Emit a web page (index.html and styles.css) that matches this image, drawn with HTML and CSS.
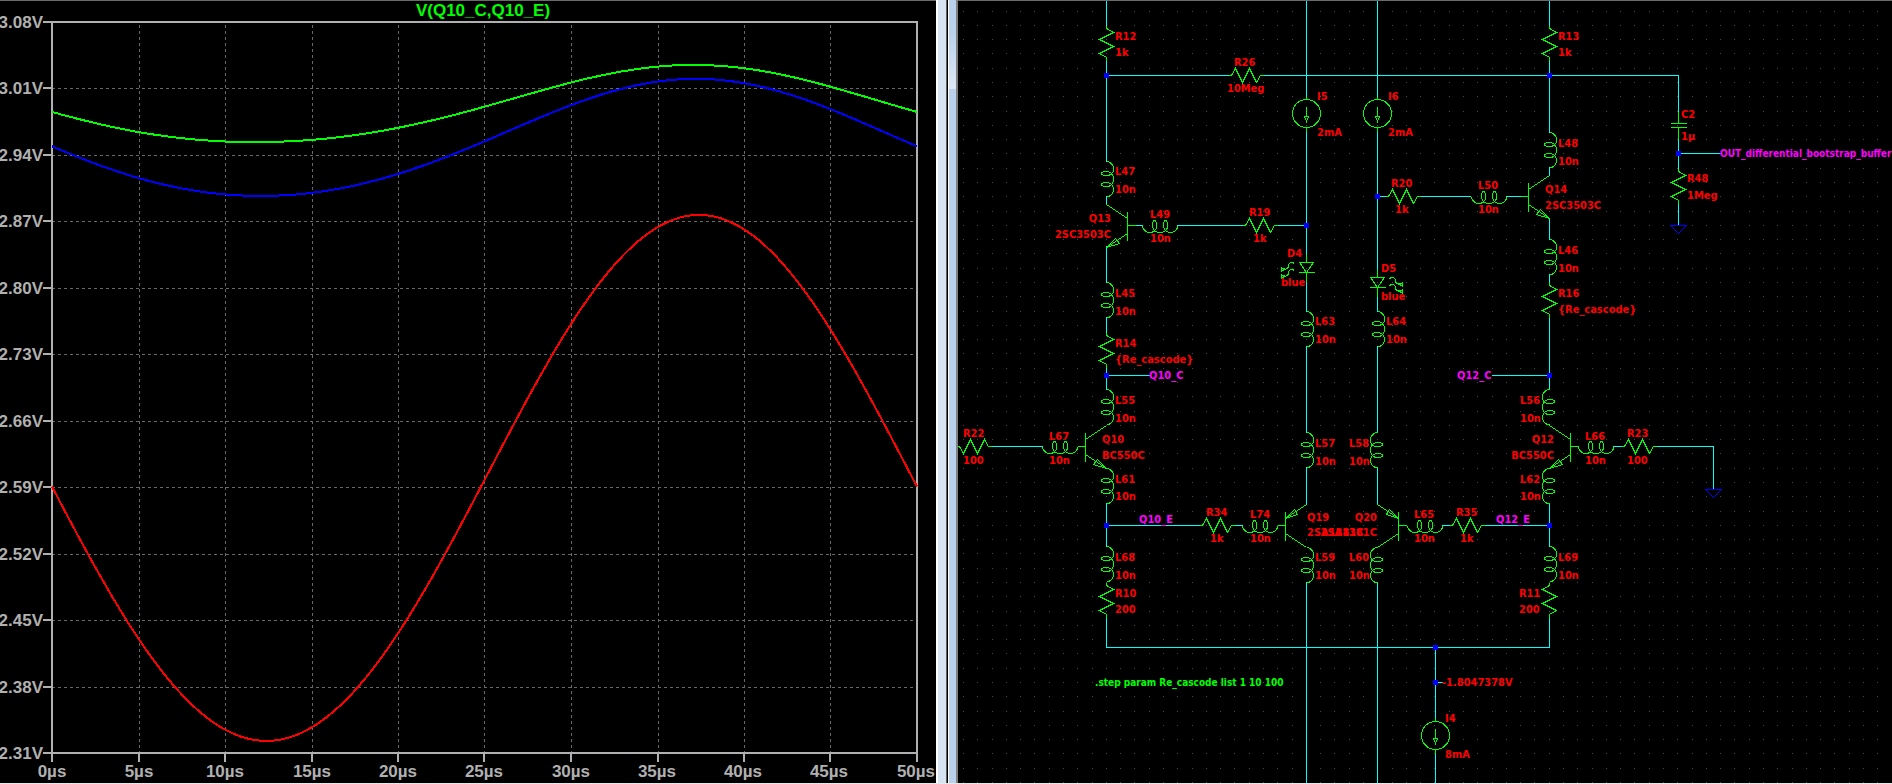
FILE: index.html
```
<!DOCTYPE html>
<html lang="en">
<head>
    <meta charset="UTF-8">
    <meta name="viewport" content="width=device-width, initial-scale=1.0">
    <title>Cascode buffer simulation</title>
    <link rel="stylesheet" href="styles.css">
</head>
<body>
    <main class="workspace">
        <section class="pane pane-plot">
            <svg class="plot" viewBox="0 0 936 783" preserveAspectRatio="xMinYMin meet" role="img" aria-label="Waveform V(Q10_C,Q10_E)">
                <text class="plot-title" x="483" y="16">V(Q10_C,Q10_E)</text>

                <path class="grid" d="M52 88.5H914M52 155.5H914M52 221.5H914M52 288.5H914M52 354.5H914M52 421.5H914M52 487.5H914M52 554.5H914M52 620.5H914M52 687.5H914"/>
                <path class="grid" d="M139.5 25V752M225.5 25V752M312.5 25V752M398.5 25V752M484.5 25V752M571.5 25V752M658.5 25V752M744.5 25V752M830.5 25V752"/>

                <path class="axis" d="M43 22H918M43 753H917M52 21V762M917 21V762"/>
                <path class="axis" d="M43 88H52M43 155H52M43 221H52M43 288H52M43 354H52M43 421H52M43 487H52M43 554H52M43 620H52M43 687H52"/>
                <path class="axis" d="M139 753V762M225 753V762M312 753V762M398 753V762M484 753V762M571 753V762M658 753V762M744 753V762M830 753V762"/>

                <g class="ticks ticks-y">
                    <text x="43" y="28">3.08V</text>
                    <text x="43" y="94">3.01V</text>
                    <text x="43" y="161">2.94V</text>
                    <text x="43" y="227">2.87V</text>
                    <text x="43" y="294">2.80V</text>
                    <text x="43" y="360">2.73V</text>
                    <text x="43" y="427">2.66V</text>
                    <text x="43" y="493">2.59V</text>
                    <text x="43" y="560">2.52V</text>
                    <text x="43" y="626">2.45V</text>
                    <text x="43" y="693">2.38V</text>
                    <text x="43" y="759">2.31V</text>
                </g>
                <g class="ticks ticks-x">
                    <text x="52" y="777">0µs</text>
                    <text x="139" y="777">5µs</text>
                    <text x="225" y="777">10µs</text>
                    <text x="312" y="777">15µs</text>
                    <text x="398" y="777">20µs</text>
                    <text x="484" y="777">25µs</text>
                    <text x="571" y="777">30µs</text>
                    <text x="657" y="777">35µs</text>
                    <text x="743" y="777">40µs</text>
                    <text x="829" y="777">45µs</text>
                    <text x="916" y="777">50µs</text>
                </g>

                <path class="trace trace-green" id="trace1"/>
                <path class="trace trace-blue" id="trace2"/>
                <path class="trace trace-red" id="trace3"/>
            </svg>
        </section>

        <div class="splitter">
            <div class="frame frame-left"></div>
            <div class="frame frame-right"></div>
        </div>

        <section class="pane pane-schematic">
            <svg class="schematic" viewBox="958 0 934 783" preserveAspectRatio="xMinYMin meet" role="img" aria-label="Differential bootstrap buffer schematic">
                <defs>
                    <pattern id="dots" x="963" y="11" width="100" height="100" patternUnits="userSpaceOnUse">
                        <path class="dots" d="M0 .5H100M0 14.5H100M0 28.5H100M0 42.5H100M0 57.5H100M0 71.5H100M0 85.5H100"/>
                    </pattern>
                    <path id="res" d="M0 0V3L7 7L-7 14L7 21L-7 28L0 32V35"/>
                    <path id="ind" d="M0 0H2C5 2 7 4 7 7C7 11 5 14 0 14C-3 14 -5 13 -5 12C-5 11 -3 10 0 10C5 10 7 14 7 17C7 22 5 25 0 25C-3 25 -5 24 -5 23C-5 22 -3 21 0 21C5 21 7 25 7 28C7 31 5 34 2 35H0"/>
                    <path id="npn" d="M0 0L-21 14M-21 7V36M-29 21H-21M-21 29L0 43L-9 34L-13 39L0 43"/>
                    <path id="pnp" d="M0 0L-21 14M-21 7V36M-29 21H-21M-21 29L0 43M-21 14L-12 5L-9 10Z"/>
                    <path id="src" d="M-14 0A14 14 0 1 0 14 0A14 14 0 1 0 -14 0M0 -17V-14M0 14V18M0 -7V3M-2 3H2L0 8Z"/>
                    <path id="led" d="M0 -8V0M-7 0H7L0 10ZM-8 10H8M0 10V19M12 1C15 -1 18 0 18 3C18 7 21 7 25 6M25 4V9L21 6M12 8C15 6 18 7 18 10C18 14 21 14 25 13M25 11V16L21 13"/>
                    <path id="cap" d="M0 -12V0M-8 0H8M-8 4H8M0 4V16"/>
                    <path id="gnd" d="M-8 0H8L0 8Z"/>
                    <rect id="node" x="-2.5" y="-2.5" width="5" height="5"/>
                </defs>

                <rect x="958" width="934" height="783" fill="url(#dots)"/>

                <g class="wires">
                    <path d="M1106.5 1V26M1106.5 60V162M1106.5 196V204M1106.5 246V283M1106.5 317V333M1106.5 367V390M1106.5 503V547M1106.5 617V647.5H1549.5V617"/>
                    <path d="M1306.5 1V98M1306.5 132V255M1306.5 282V312M1306.5 346V433M1306.5 467V505M1306.5 582V783"/>
                    <path d="M1377.5 1V98M1377.5 132V270M1377.5 296V312M1377.5 346V433M1377.5 467V505M1377.5 582V783"/>
                    <path d="M1549.5 1V26M1549.5 60V133M1549.5 167V176M1549.5 218V240M1549.5 274V283M1549.5 317V390M1549.5 503V547"/>
                    <path d="M1106 75.5H1229M1263 75.5H1678.5V112M1678.5 139V169M1678.5 153.5H1721M1678.5 203V225"/>
                    <path d="M1135 225.5H1143M1177 225.5H1243M1277 225.5H1307M1377 196.5H1386M1420 196.5H1471M1506 196.5H1521"/>
                    <path d="M991 446.5H1043M1613 446.5H1622M1656 446.5H1713.5V489M1106 375.5H1150M1492 375.5H1549"/>
                    <path d="M1106 525.5H1200M1234 525.5H1243M1442 525.5H1450M1485 525.5H1549"/>
                    <path d="M1435.5 647V720M1435.5 754V783M1435 682.5H1443"/>
                </g>

                <g class="parts">
                    <use href="#res" transform="translate(1106.5 25.5)"/>
                    <use href="#res" transform="translate(1549.5 25.5)"/>
                    <use href="#res" transform="translate(1228.5 75.5) rotate(-90)"/>
                    <use href="#res" transform="translate(1242.5 225.5) rotate(-90)"/>
                    <use href="#res" transform="translate(1385.5 196.5) rotate(-90)"/>
                    <use href="#res" transform="translate(1678.5 168.5)"/>
                    <use href="#res" transform="translate(1549.5 282.5)"/>
                    <use href="#res" transform="translate(1106.5 332.5)"/>
                    <use href="#res" transform="translate(991.5 446.5) rotate(90) scale(-1 1)"/>
                    <use href="#res" transform="translate(1621.5 446.5) rotate(-90)"/>
                    <use href="#res" transform="translate(1199.5 525.5) rotate(-90)"/>
                    <use href="#res" transform="translate(1449.5 525.5) rotate(-90)"/>
                    <use href="#res" transform="translate(1106.5 582.5)"/>
                    <use href="#res" transform="translate(1549.5 582.5) scale(-1 1)"/>

                    <use href="#ind" transform="translate(1106.5 161.5)"/>
                    <use href="#ind" transform="translate(1549.5 132.5)"/>
                    <use href="#ind" transform="translate(1549.5 239.5)"/>
                    <use href="#ind" transform="translate(1106.5 282.5)"/>
                    <use href="#ind" transform="translate(1306.5 311.5)"/>
                    <use href="#ind" transform="translate(1377.5 311.5)"/>
                    <use href="#ind" transform="translate(1106.5 389.5)"/>
                    <use href="#ind" transform="translate(1549.5 389.5) scale(-1 1)"/>
                    <use href="#ind" transform="translate(1306.5 432.5)"/>
                    <use href="#ind" transform="translate(1377.5 432.5) scale(-1 1)"/>
                    <use href="#ind" transform="translate(1106.5 468.5)"/>
                    <use href="#ind" transform="translate(1549.5 468.5) scale(-1 1)"/>
                    <use href="#ind" transform="translate(1106.5 546.5)"/>
                    <use href="#ind" transform="translate(1306.5 547.5)"/>
                    <use href="#ind" transform="translate(1377.5 547.5) scale(-1 1)"/>
                    <use href="#ind" transform="translate(1549.5 546.5)"/>
                    <use href="#ind" transform="matrix(0 1 1 0 1142.5 225.5)"/>
                    <use href="#ind" transform="matrix(0 1 1 0 1471.5 196.5)"/>
                    <use href="#ind" transform="matrix(0 1 1 0 1042.5 446.5)"/>
                    <use href="#ind" transform="matrix(0 1 1 0 1578.5 446.5)"/>
                    <use href="#ind" transform="matrix(0 1 1 0 1242.5 525.5)"/>
                    <use href="#ind" transform="matrix(0 1 1 0 1407.5 525.5)"/>

                    <use href="#npn" transform="translate(1106.5 204.5) scale(-1 1)"/>
                    <use href="#npn" transform="translate(1549.5 175.5)"/>
                    <use href="#npn" transform="translate(1106.5 425.5)"/>
                    <use href="#npn" transform="translate(1549.5 425.5) scale(-1 1)"/>
                    <use href="#pnp" transform="translate(1306.5 504.5)"/>
                    <use href="#pnp" transform="translate(1377.5 504.5) scale(-1 1)"/>

                    <use href="#src" transform="translate(1306.5 113.5)"/>
                    <use href="#src" transform="translate(1377.5 113.5)"/>
                    <use href="#src" transform="translate(1435.5 735.5)"/>
                    <use href="#led" transform="translate(1306.5 262.5) scale(-1 1)"/>
                    <use href="#led" transform="translate(1377.5 277.5)"/>
                    <use href="#cap" transform="translate(1678.5 123.5)"/>
                </g>

                <g class="grounds">
                    <use href="#gnd" x="1678.5" y="225.5"/>
                    <use href="#gnd" x="1713.5" y="489.5"/>
                </g>

                <g class="nodes">
                    <use href="#node" x="1106.5" y="75.5"/>
                    <use href="#node" x="1549.5" y="75.5"/>
                    <use href="#node" x="1678.5" y="153.5"/>
                    <use href="#node" x="1377.5" y="196.5"/>
                    <use href="#node" x="1306.5" y="225.5"/>
                    <use href="#node" x="1106.5" y="375.5"/>
                    <use href="#node" x="1549.5" y="375.5"/>
                    <use href="#node" x="1106.5" y="525.5"/>
                    <use href="#node" x="1549.5" y="525.5"/>
                    <use href="#node" x="1435.5" y="647.5"/>
                    <use href="#node" x="1435.5" y="682.5"/>
                </g>

                <g class="labels">
                    <text x="1115" y="40">R12</text><text x="1115" y="56">1k</text>
                    <text x="1558" y="40">R13</text><text x="1558" y="56">1k</text>
                    <text x="1234" y="66">R26</text><text x="1227" y="92">10Meg</text>
                    <text x="1317" y="100">I5</text><text x="1317" y="136">2mA</text>
                    <text x="1388" y="100">I6</text><text x="1388" y="136">2mA</text>
                    <text x="1681" y="118">C2</text><text x="1681" y="140">1µ</text>
                    <text x="1687" y="182">R48</text><text x="1687" y="199">1Meg</text>
                    <text x="1558" y="147">L48</text><text x="1558" y="165">10n</text>
                    <text x="1115" y="175">L47</text><text x="1115" y="193">10n</text>
                    <text x="1391" y="187">R20</text><text x="1395" y="213">1k</text>
                    <text x="1478" y="189">L50</text><text x="1478" y="213">10n</text>
                    <text x="1545" y="193">Q14</text><text x="1545" y="209">2SC3503C</text>
                    <text class="end" x="1111" y="222">Q13</text><text class="end" x="1111" y="238">2SC3503C</text>
                    <text x="1150" y="218">L49</text><text x="1150" y="242">10n</text>
                    <text x="1249" y="216">R19</text><text x="1253" y="242">1k</text>
                    <text x="1287" y="257">D4</text><text x="1281" y="286">blue</text>
                    <text x="1381" y="272">D5</text><text x="1381" y="300">blue</text>
                    <text x="1558" y="254">L46</text><text x="1558" y="272">10n</text>
                    <text x="1558" y="297">R16</text><text x="1558" y="313">{Re_cascode}</text>
                    <text x="1115" y="297">L45</text><text x="1115" y="315">10n</text>
                    <text x="1115" y="347">R14</text><text x="1115" y="363">{Re_cascode}</text>
                    <text x="1315" y="325">L63</text><text x="1315" y="343">10n</text>
                    <text x="1386" y="325">L64</text><text x="1386" y="343">10n</text>
                    <text x="1115" y="404">L55</text><text x="1115" y="422">10n</text>
                    <text x="1520" y="404">L56</text><text x="1520" y="422">10n</text>
                    <text x="963" y="437">R22</text><text x="963" y="464">100</text>
                    <text x="1049" y="440">L67</text><text x="1049" y="464">10n</text>
                    <text x="1102" y="443">Q10</text><text x="1102" y="459">BC550C</text>
                    <text x="1315" y="447">L57</text><text x="1315" y="465">10n</text>
                    <text x="1349" y="447">L58</text><text x="1349" y="465">10n</text>
                    <text class="end" x="1554" y="443">Q12</text><text class="end" x="1554" y="459">BC550C</text>
                    <text x="1585" y="440">L66</text><text x="1585" y="464">10n</text>
                    <text x="1627" y="437">R23</text><text x="1627" y="464">100</text>
                    <text x="1115" y="483">L61</text><text x="1115" y="500">10n</text>
                    <text x="1520" y="483">L62</text><text x="1520" y="500">10n</text>
                    <text x="1206" y="516">R34</text><text x="1210" y="542">1k</text>
                    <text x="1250" y="518">L74</text><text x="1250" y="542">10n</text>
                    <text x="1307" y="521">Q19</text><text x="1307" y="536">2SA1381C</text>
                    <text class="end" x="1377" y="521">Q20</text><text class="end" x="1377" y="536">2SA1381C</text>
                    <text x="1414" y="518">L65</text><text x="1414" y="542">10n</text>
                    <text x="1456" y="516">R35</text><text x="1460" y="542">1k</text>
                    <text x="1115" y="561">L68</text><text x="1115" y="579">10n</text>
                    <text x="1315" y="561">L59</text><text x="1315" y="579">10n</text>
                    <text x="1349" y="561">L60</text><text x="1349" y="579">10n</text>
                    <text x="1558" y="561">L69</text><text x="1558" y="579">10n</text>
                    <text x="1115" y="597">R10</text><text x="1115" y="613">200</text>
                    <text x="1519" y="597">R11</text><text x="1519" y="613">200</text>
                    <text x="1442" y="686">-1.8047378V</text>
                    <text x="1445" y="722">I4</text><text x="1445" y="758">8mA</text>
                </g>

                <g class="labels nets">
                    <text class="long" x="1720" y="157">OUT_differential_bootstrap_buffer</text>
                    <text x="1149" y="379">Q10_C</text>
                    <text x="1457" y="379">Q12_C</text>
                    <text x="1139" y="523">Q10_E</text>
                    <text x="1496" y="523">Q12_E</text>
                </g>

                <text class="directive long" x="1095" y="686">.step param Re_cascode list 1 10 100</text>
            </svg>
        </section>
    </main>
    <script src="plot.js"></script>
</body>
</html>
```
FILE: styles.css
```
body {
    margin: 0;
    background-color: #e8e8e8;
    font-family: "Liberation Sans", Arial, sans-serif;
}
.workspace {
    display: flex;
    box-sizing: border-box;
    height: 100vh;
    border-bottom: 1px solid #e8e8e8;
}
.pane {
    min-width: 0;
    overflow: hidden;
    background: linear-gradient(#6b6b6b, #6b6b6b) top / 100% 1px no-repeat #000;
}
.pane-plot {
    flex: 936 1 0;
}
.pane-schematic {
    flex: 934 1 0;
}
.plot,
.schematic {
    display: block;
    width: 100%;
    height: 100%;
}

/* window borders between the two panes */
.splitter {
    display: flex;
    flex: 0 0 22px;
    gap: 1px;
    background-color: #000;
}
.frame-left {
    flex: 0 0 8px;
    background-color: #d6e4f1;
    border-left: 2px solid #fff;
    border-right: 1px solid #606060;
}
.frame-right {
    flex: 1;
    background: linear-gradient(#b9d1ea 0, #b9d1ea 30px, #dce7f5 86px, #dce7f5 89px, #b9d1ea 89px);
    border-left: 1px solid #fff;
    border-right: 2px solid #808080;
}

/* waveform plot */
.plot path {
    fill: none;
    shape-rendering: crispEdges;
}
.plot .grid {
    stroke: #686868;
    stroke-dasharray: 3 3;
}
.plot .axis {
    stroke: #b0b0b0;
    stroke-width: 2;
}
.plot .trace {
    stroke-width: 2;
}
.trace-green {
    stroke: #0f0;
}
.trace-blue {
    stroke: #00f;
}
.trace-red {
    stroke: #f00;
}
.plot text {
    font-size: 17px;
    font-weight: bold;
}
.plot-title {
    fill: #0f0;
    text-anchor: middle;
}
.ticks {
    fill: #b0b0b0;
}
.ticks-y {
    text-anchor: end;
}
.ticks-x {
    text-anchor: middle;
}

/* schematic */
.schematic path,
.schematic rect {
    shape-rendering: crispEdges;
}
.dots {
    stroke: #484848;
    stroke-dasharray: 1 13 1 14 1 13 1 13 1 13 1 14 1 13;
}
.wires {
    fill: none;
    stroke: #0ff;
}
.parts {
    fill: none;
    stroke: #0f0;
}
.grounds {
    fill: none;
    stroke: #00f;
}
.nodes {
    fill: #00f;
}
.labels,
.directive {
    font-family: "DejaVu Sans Condensed", "DejaVu Sans", Tahoma, sans-serif;
    font-size: 11px;
    font-weight: bold;
    fill: #f00;
}
.labels .end {
    text-anchor: end;
}
.nets {
    fill: #f0f;
}
.directive {
    fill: #0f0;
}
.long {
    font-size: 10px;
}
```
FILE: plot.js
```
const LEFT = 52;
const WIDTH = 865;

// offset, sine, cosine and second harmonic of each step of the sweep
const traces = {
    trace1: [106.4, 38.5, 2.6, 2.9],
    trace2: [140.6, 58.5, 2.5, 3.2],
    trace3: [480.6, 263, 3.3, 2.7]
};

for (const id in traces) {
    const [offset, sine, cosine, second] = traces[id];
    const points = [];
    for (let x = 0; x <= WIDTH; x += 5) {
        const a = 2 * Math.PI * x / WIDTH;
        const y = offset + sine * Math.sin(a) + cosine * Math.cos(a) + second * Math.cos(2 * a);
        points.push((LEFT + x) + ' ' + y.toFixed(1));
    }
    document.getElementById(id).setAttribute('d', 'M' + points.join('L'));
}
```
